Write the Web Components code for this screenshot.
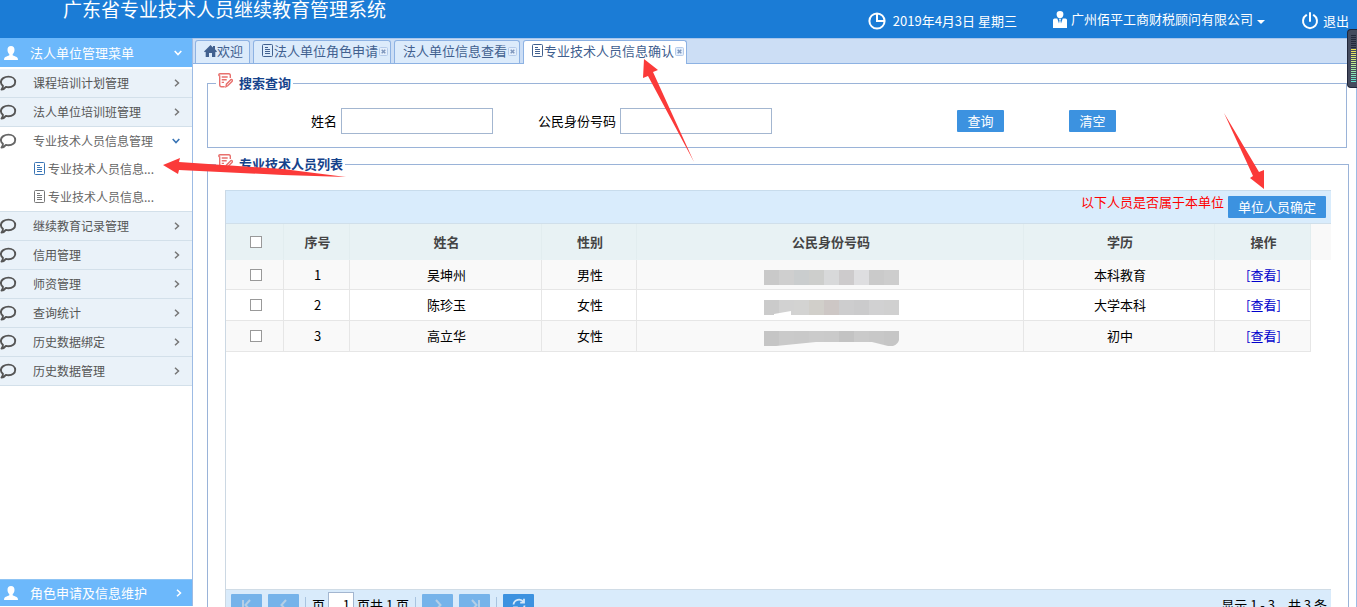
<!DOCTYPE html>
<html lang="zh-CN">
<head>
<meta charset="utf-8">
<title>广东省专业技术人员继续教育管理系统</title>
<style>
  html, body { margin: 0; height: 100%; overflow: hidden; background: #fff; }
  body { font: 13px/20px "Noto Sans CJK SC", "Noto Sans", sans-serif; color: #000; }
</style>
</head>
<body>
<management-app></management-app>

<script>
const ICONS = {
  clock: ['0 0 18 18', '<g fill="none" stroke="currentColor" stroke-width="2"><circle cx="9" cy="9" r="7.6"/><path d="M9 1.5V9h7"/></g>'],
  person: ['0 0 14 17', '<path fill="currentColor" d="M7 0a3.4 3.4 0 0 1 3.4 3.6C10.300 5.800 9 7.400 7 7.400S3.700 5.800 3.600 3.600A3.400 3.400 0 0 1 7 0zM0 9q0-1.500 1.500-1.600L4.300 7.400 6 12.500 6.600 9.500 6 7.900h2L7.400 9.500 8 12.500 9.700 7.400l2.800 0Q14 7.500 14 9v8H0z"/>'],
  power: ['0 0 18 18', '<g fill="none" stroke="currentColor" stroke-width="2" stroke-linecap="round"><path d="M5.300 3.200a7 7 0 1 0 7.400 0M9 1v8"/></g>'],
  caret: ['0 0 8 5', '<path fill="currentColor" d="M0 0h8L4 4z"/>'],
  bust: ['0 0 14 14', '<path fill="currentColor" d="M7 0c2.300 0 3.600 1.600 3.500 3.900C10.400 6 9.600 7.300 8.700 8v1.200c.6.8 4.700 1.300 5.100 3.200L14 14H0l.2-1.600c.4-1.900 4.500-2.400 5.100-3.200V8c-.9-.7-1.700-2-1.800-4.100C3.400 1.600 4.700 0 7 0z"/>'],
  comment: ['0 0 17 16', '<path fill="none" stroke="currentColor" stroke-width="1.900" stroke-linejoin="round" d="M8.500 1.600c3.900 0 6.700 2.300 6.700 5.300s-2.800 5.400-6.700 5.400q-1.400 0-2.600-.4Q4.300 14.200 1.500 14.600q1.500-1.700 1.400-3.900Q.9 9.300.9 6.900C.9 3.900 4.600 1.600 8.500 1.600z"/>'],
  right: ['0 0 6 8', '<path fill="none" stroke="currentColor" stroke-width="1.500" d="M1 .7 4.500 4 1 7.300"/>'],
  down: ['0 0 8 6', '<path fill="none" stroke="currentColor" stroke-width="1.600" d="M.7 1 4 4.500 7.300 1"/>'],
  page: ['0 0 12 14', '<g fill="none" stroke="currentColor"><rect x=".5" y=".5" width="10" height="12" rx="1"/><path d="M3 3.500h3M3 5.500h5M3 7.500h5M3 9.500h5"/></g>'],
  home: ['0 0 13 12', '<path fill="currentColor" d="M6.500 0 9 2.400V1h2v3.300L13 6.400 12 7.200 11.300 6.700V12H8V8H5v4H1.700V6.700L1 7.200 0 6.400z"/>'],
  close: ['0 0 9 9', '<rect x=".5" y=".5" width="8" height="8" rx="1" fill="#e4effc" stroke="#b5cbea"/><path d="M2.700 2.700l3.600 3.600M6.300 2.700 2.700 6.300" stroke="#7f97bd" stroke-width="1.500"/>'],
  edit: ['0 0 15 15', '<g fill="none" stroke="#e8706d" stroke-width="1.400"><path d="M12.300 5V2.300Q12.300.7 10.900.7H2Q.8.700.8 2q0 .7.900 1v8.500q0 2.200 1.700 2.200h3.300M3.700 4h6M3.700 6.700h5M3.700 9.400H6M8 13.700l.4-2.500 4.300-4.500q1-.6 1.500.2.500.8-.2 1.500l-4.300 4.400z"/></g>'],
  first: ['0 0 12 12', '<path d="M2 1v10" stroke="currentColor" stroke-width="2"/><path d="M9 1 4.500 6 9 11" stroke="currentColor" stroke-width="2" fill="none"/>'],
  prev: ['0 0 12 12', '<path d="M8 1 3.500 6 8 11" stroke="currentColor" stroke-width="2" fill="none"/>'],
  next: ['0 0 12 12', '<path d="M4 1l4.500 5L4 11" stroke="currentColor" stroke-width="2" fill="none"/>'],
  last: ['0 0 12 12', '<path d="M10 1v10" stroke="currentColor" stroke-width="2"/><path d="M3 1l4.500 5L3 11" stroke="currentColor" stroke-width="2" fill="none"/>'],
  refresh: ['0 0 14 14', '<g fill="none" stroke="currentColor" stroke-width="1.800"><path d="M1.500 6.500A5.500 5.500 0 0 1 11.500 4M12.500 7.500A5.500 5.500 0 0 1 2.500 10"/><path d="M12 .8V4.600H8.200M2 13.200V9.400h3.800"/></g>']
};

function define(name, html) {
  const template = document.createElement('template');
  template.innerHTML = html;
  customElements.define(name, class extends HTMLElement {
    constructor() {
      super();
      this.attachShadow({ mode: 'open' }).append(template.content.cloneNode(true));
    }
  });
}

customElements.define('ui-icon', class extends HTMLElement {
  connectedCallback() {
    if (this.shadowRoot) return;
    const [box, shape] = ICONS[this.getAttribute('name')];
    const [, , w, h] = box.split(' ');
    this.attachShadow({ mode: 'open' }).innerHTML =
      `<style>:host{display:inline-flex;flex:none}svg{display:block}</style>
       <svg width="${w}" height="${h}" viewBox="${box}" aria-hidden="true">${shape}</svg>`;
  }
});

define('app-header', `
<style>
  :host { display: flex; justify-content: space-between; height: 38px; background: #1b7cd6; color: #fff; overflow: hidden; }
  h1 { margin: 0 0 0 63px; font-size: 19px; line-height: 18px; font-weight: 400; white-space: nowrap; }
  .tools { display: flex; align-items: center; gap: 36px; padding: 4px 8px 0 0; white-space: nowrap; }
  .date, a { display: flex; align-items: center; gap: 7px; }
  a { gap: 4px; color: inherit; text-decoration: none; }
  button { display: flex; align-items: center; gap: 4px; border: 0; padding: 0 0 4px; background: none; color: inherit; font: inherit; }
  button ui-icon:last-child { padding-top: 6px; }
</style>
<h1>广东省专业技术人员继续教育管理系统</h1>
<div class="tools">
  <span class="date"><ui-icon name="clock"></ui-icon><time datetime="2019-04-03">2019年4月3日 星期三</time></span>
  <button><ui-icon name="person"></ui-icon>广州佰平工商财税顾问有限公司<ui-icon name="caret"></ui-icon></button>
  <a href="#logout"><ui-icon name="power"></ui-icon>退出</a>
</div>`);

define('menu-title', `
<style>
  :host { display: block; }
  button { display: flex; align-items: center; width: 100%; height: var(--title-height, 29px); border: 0; padding: 0 10px 0 4px; background: #6cb8fb; color: #fff; font: inherit; text-align: left; }
  .text { flex: 1; padding-left: 12px; }
</style>
<button><ui-icon name="bust"></ui-icon><span class="text"><slot></slot></span><slot name="mark"></slot></button>`);

define('menu-item', `
<style>
  :host { display: block; color: #555; font-size: 12px; }
  a { display: flex; align-items: center; box-sizing: border-box; height: 29px; padding: 0 12px 0 0; background: #eaf2f9; border-bottom: 1px solid #d3e0ea; color: inherit; text-decoration: none; }
  .text { flex: 1; padding-left: 16px; }
  .right { color: #777; }
  .down { display: none; color: #3a75b5; }
  :host([open]) { border-bottom: 1px solid #d3e0ea; color: #666; }
  :host([open]) a { height: 28px; background: #fff; border: 0; }
  :host([open]) .down { display: inline-flex; }
  :host([open]) .right { display: none; }
</style>
<a href="#menu"><ui-icon name="comment"></ui-icon><span class="text"><slot></slot></span>
<ui-icon class="right" name="right"></ui-icon><ui-icon class="down" name="down"></ui-icon></a>
<slot name="sub"></slot>`);

define('sub-item', `
<style>
  :host { display: block; }
  a { display: flex; align-items: center; gap: 2px; height: 28px; padding-left: 34px; color: #666; text-decoration: none; }
  ui-icon { color: #777; }
  :host([current]) ui-icon { color: #3a75b5; }
</style>
<a href="#sub"><ui-icon name="page"></ui-icon><slot></slot></a>`);

define('side-menu', `
<style>
  :host { display: flex; flex-direction: column; justify-content: space-between; box-sizing: border-box; width: 193px; height: calc(100vh - 39px); flex: none; border-right: 1px solid #9dbbe4; }
  nav { display: block; padding-top: 2px; }
  .bottom { --title-height: 26px; border-top: 1px solid #8fc4f4; }
</style>
<div>
  <menu-title>法人单位管理菜单<ui-icon slot="mark" name="down"></ui-icon></menu-title>
  <nav>
    <menu-item>课程培训计划管理</menu-item>
    <menu-item>法人单位培训班管理</menu-item>
    <menu-item open>专业技术人员信息管理
      <sub-item slot="sub" current>专业技术人员信息...</sub-item>
      <sub-item slot="sub">专业技术人员信息...</sub-item>
    </menu-item>
    <menu-item>继续教育记录管理</menu-item>
    <menu-item>信用管理</menu-item>
    <menu-item>师资管理</menu-item>
    <menu-item>查询统计</menu-item>
    <menu-item>历史数据绑定</menu-item>
    <menu-item>历史数据管理</menu-item>
  </nav>
</div>
<menu-title class="bottom">角色申请及信息维护<ui-icon slot="mark" name="right"></ui-icon></menu-title>`);

define('tab-item', `
<style>
  :host { display: flex; position: relative; box-sizing: border-box; height: 23px; border: 1px solid #8db2e3; border-bottom: 0; border-radius: 3px 3px 0 0; background: #dcebfb; color: #41608f; }
  :host([active]) { background: #fff; height: 24px; }
  .tab { display: flex; align-items: center; align-self: flex-start; gap: 0; border: 0; padding: 0 12px 0 8px; background: none; color: inherit; font: inherit; line-height: 20px; white-space: nowrap; }
  :host([fixed]) .tab { padding-right: 6px; }
  .close { position: absolute; top: 3px; right: 2px; border: 0; padding: 0; background: none; }
  :host([fixed]) .close { display: none; }
</style>
<button class="tab"><slot name="icon"></slot><slot></slot></button>
<button class="close" aria-label="关闭"><ui-icon name="close"></ui-icon></button>`);

define('tab-strip', `
<style>
  :host { display: flex; align-items: flex-start; gap: 3px; box-sizing: border-box; height: 26px; padding: 1px 2px 0; background: #ccdef5; border-bottom: 1px solid #8db2e3; border-top: 1px solid #a9c6ec; }
</style>
<slot></slot>`);

define('field-box', `
<style>
  :host { display: block; }
  fieldset { display: flex; flex-direction: column; box-sizing: border-box; height: 100%; min-width: 0; margin: 0; padding: 0; border: 1px solid #9ab3d8; }
  legend { display: flex; gap: 6px; margin-left: 8px; padding: 0 2px; height: 20px; color: #15428b; font-weight: 700; line-height: 20px; }
  .body { display: flex; flex-direction: column; flex: 1; min-height: 0; }
</style>
<fieldset>
  <legend><ui-icon name="edit"></ui-icon><slot name="title"></slot></legend>
  <div class="body"><slot></slot></div>
</fieldset>`);

define('search-form', `
<style>
  :host { display: block; padding: 15px 0 13px; }
  form { display: grid; grid-template-columns: 133fr 152fr 127fr 152fr 185fr 112fr 277fr; align-items: center; }
  label { justify-self: end; padding-right: 4px; }
  input { box-sizing: border-box; width: 100%; height: 26px; border: 1px solid #a3b6d0; padding: 0 4px; font: inherit; }
  button { width: 47px; height: 22px; border: 0; border-radius: 1px; padding: 0; background: #3c92e0; color: #fff; font: inherit; }
  .query { grid-column: 6; }
</style>
<form>
  <label for="name">姓名</label><input id="name" type="text">
  <label for="idno">公民身份号码</label><input id="idno" type="text">
  <button class="query" type="button">查询</button>
  <button type="reset">清空</button>
</form>`);

customElements.define('masked-number', class extends HTMLElement {
  connectedCallback() {
    if (this.shadowRoot) return;
    const rows = {
      a: [['#c9c9c9','#cfcfcf','#cacdce','#cdcecc','#d8d9da','#cdcbcc','#dedee0','#cacaca','#cdcdcd'], ''],
      b: [['#cbcbcb','#d2d2d2','#d3d3d2','#d1cfca','#cdc7c5','#cdcdce','#cbcbcc','#d1d1d2','#d0d0d0'], 'M10 24V23L27 20V24z'],
      c: [['#c5c5c5','#cacaca','#c9c9c9','#cbcbcb','#cacaca','#c3c3c3','#cacaca','#c8c8c8','#c6c6c6'], 'M12 24L52 20H108L124 24zM129 24Q134 22 135 18V24z']
    };
    const kind = this.getAttribute('kind');
    const [colors, cut] = rows[kind];
    this.attachShadow({ mode: 'open' }).innerHTML = `<style>:host{display:block}svg{display:block;margin:auto}</style>
      <svg width="135" height="28" role="img" aria-label="已隐藏">
      ${colors.map((c, i) => `<rect x="${i * 15}" y="9" width="15" height="15" fill="${c}"/>`).join('')}
      <path d="${cut}" fill="${kind === 'b' ? '#fff' : '#f9f9f9'}"/></svg>`;
  }
});

define('staff-table', `
<style>
  :host { display: block; background: linear-gradient(#f9f9f9, #f9f9f9) top / 100% 36px no-repeat; }
  table { width: calc(100% - 20px); table-layout: fixed; border-collapse: separate; border-spacing: 0; text-align: center; }
  th, td { box-sizing: border-box; padding: 0 0 0 2px; border-right: 1px solid #e6e6e6; border-bottom: 1px solid #e6e6e6; }
  th { height: 36px; background: #e8f2f4; border-right-color: #e2edef; border-bottom-color: #e8f2f4; color: #444; font-weight: 700; }
  td { height: 30px; }
  tr:nth-child(n+2) td { height: 31px; }
  tr:nth-child(odd) td { background: #f9f9f9; }
  input { appearance: none; display: block; box-sizing: border-box; width: 12px; height: 12px; margin: 0 auto; border: 1px solid #999; background: #fff; }
  a { color: #00c; text-decoration: none; }
  .c1 { width: 58px; } .c2 { width: 66px; } .c3 { width: 192px; } .c4 { width: 95px; } .c6 { width: 191px; } .c7 { width: 96px; }
</style>
<table>
  <colgroup><col class="c1"><col class="c2"><col class="c3"><col class="c4"><col><col class="c6"><col class="c7"></colgroup>
  <thead><tr><th><input type="checkbox" aria-label="全选"></th><th>序号</th><th>姓名</th><th>性别</th><th>公民身份号码</th><th>学历</th><th>操作</th></tr></thead>
  <tbody>
    <tr><td><input type="checkbox" aria-label="选择 1"></td><td>1</td><td>吴坤州</td><td>男性</td><td><masked-number kind="a"></masked-number></td><td>本科教育</td><td><a href="#1">[查看]</a></td></tr>
    <tr><td><input type="checkbox" aria-label="选择 2"></td><td>2</td><td>陈珍玉</td><td>女性</td><td><masked-number kind="b"></masked-number></td><td>大学本科</td><td><a href="#2">[查看]</a></td></tr>
    <tr><td><input type="checkbox" aria-label="选择 3"></td><td>3</td><td>高立华</td><td>女性</td><td><masked-number kind="c"></masked-number></td><td>初中</td><td><a href="#3">[查看]</a></td></tr>
  </tbody>
</table>`);

define('page-bar', `
<style>
  :host { display: flex; align-items: center; justify-content: space-between; box-sizing: border-box; height: 30px; padding: 0 4px 0 5px; background: #d9ebfb; border-top: 1px solid #d0dce6; }
  .group { display: flex; align-items: center; gap: 6px; }
  button { display: flex; align-items: center; justify-content: center; width: 31px; height: 22px; border: 0; border-radius: 1px; padding: 0; background: #3c92e0; color: #d5e8f8; }
  button:disabled { background: #75b3ea; color: #b5cfe6; }
  i { width: 1px; height: 16px; background: #a9c4e0; }
  label { display: flex; align-items: center; gap: 3px; }
  input { box-sizing: border-box; width: 26px; height: 26px; border: 1px solid #a3b6d0; padding: 0 3px; font: inherit; text-align: right; }
</style>
<div class="group">
  <button disabled aria-label="首页"><ui-icon name="first"></ui-icon></button>
  <button disabled aria-label="上一页"><ui-icon name="prev"></ui-icon></button>
  <i></i>
  <label>页<input type="text" value="1"><span>页共 1 页</span></label>
  <i></i>
  <button disabled aria-label="下一页"><ui-icon name="next"></ui-icon></button>
  <button disabled aria-label="末页"><ui-icon name="last"></ui-icon></button>
  <i></i>
  <button aria-label="刷新"><ui-icon name="refresh"></ui-icon></button>
</div>
<span>显示 1 - 3，共 3 条</span>`);

define('staff-panel', `
<style>
  :host { display: flex; flex-direction: column; flex: 1; min-height: 0; margin: 16px 17px 18px; border-left: 1px solid #ccd8e3; border-top: 1px solid #c8dcec; }
  .bar { display: flex; justify-content: flex-end; gap: 4px; box-sizing: border-box; height: 33px; padding-right: 5px; background: #d9ecfc; border-bottom: 1px solid #d0dfea; }
  .note { color: #f00; line-height: 22px; }
  .bar button { align-self: center; height: 22px; border: 0; border-radius: 1px; padding: 0 10px; background: #3c92e0; color: #fff; font: inherit; }
  staff-table { flex: none; }
  .space { flex: 1; }
</style>
<div class="bar"><span class="note">以下人员是否属于本单位</span><button>单位人员确定</button></div>
<staff-table></staff-table>
<div class="space"></div>
<page-bar></page-bar>`);

define('volume-meter', `
<style>
  :host { position: absolute; top: 29px; right: 0; box-sizing: border-box; width: 10px; height: 59px; padding: 5px 1px 5px 3px; border: 1px solid #20263a; border-right: 0; border-radius: 4px 0 0 4px; background: #454b5e; }
  svg { display: block; }
</style>
<svg width="5" height="47" aria-hidden="true">
  <defs><linearGradient id="level" gradientUnits="userSpaceOnUse" x1="0" y1="0" x2="0" y2="47">
    <stop offset=".3" stop-color="#23283a"/><stop offset=".3" stop-color="#f0e350"/><stop offset=".6" stop-color="#c2ec8c"/><stop offset="1" stop-color="#5fe0cf"/>
  </linearGradient></defs>
  <path stroke="url(#level)" stroke-width="5" stroke-dasharray="1 1" d="M2.500 0 2.501 47"/>
</svg>`);

define('pointer-arrows', `
<style>
  :host { position: absolute; top: 0; left: 0; pointer-events: none; }
  svg { display: block; }
</style>
<svg width="1280" height="200" fill="#fb3a39" aria-hidden="true">
  <path d="M644 59 643 78 648 76 694 162 653 72 658 70z"/>
  <path d="M1264 189 1250 178 1253 176 1224 113 1259 172 1264 170z"/>
  <path d="M163 165 180 158 179 162 283 169 346 177 283 175 179 170 178 174z"/>
</svg>`);

define('management-app', `
<style>
  :host { display: block; position: relative; }
  .body { display: flex; align-items: flex-start; }
  main { display: flex; flex-direction: column; flex: 1; min-width: 0; height: calc(100vh - 3px); }
  .content { display: flex; flex-direction: column; flex: 1; min-height: 0; gap: 6px; padding: 9px 7px 4px 14px; border-right: 1px solid #9dbbe4; }
  .search { margin-right: 2px; }
  .list { flex: 1; min-height: 0; }
</style>
<app-header></app-header>
<div class="body">
  <side-menu></side-menu>
  <main>
    <tab-strip>
      <tab-item fixed><ui-icon slot="icon" name="home"></ui-icon>欢迎</tab-item>
      <tab-item><ui-icon slot="icon" name="page"></ui-icon>法人单位角色申请</tab-item>
      <tab-item>法人单位信息查看</tab-item>
      <tab-item active><ui-icon slot="icon" name="page"></ui-icon>专业技术人员信息确认</tab-item>
    </tab-strip>
    <div class="content">
      <field-box class="search"><span slot="title">搜索查询</span><search-form></search-form></field-box>
      <field-box class="list"><span slot="title">专业技术人员列表</span><staff-panel></staff-panel></field-box>
    </div>
  </main>
</div>
<pointer-arrows></pointer-arrows>
<volume-meter></volume-meter>`);
</script>
</body>
</html>
